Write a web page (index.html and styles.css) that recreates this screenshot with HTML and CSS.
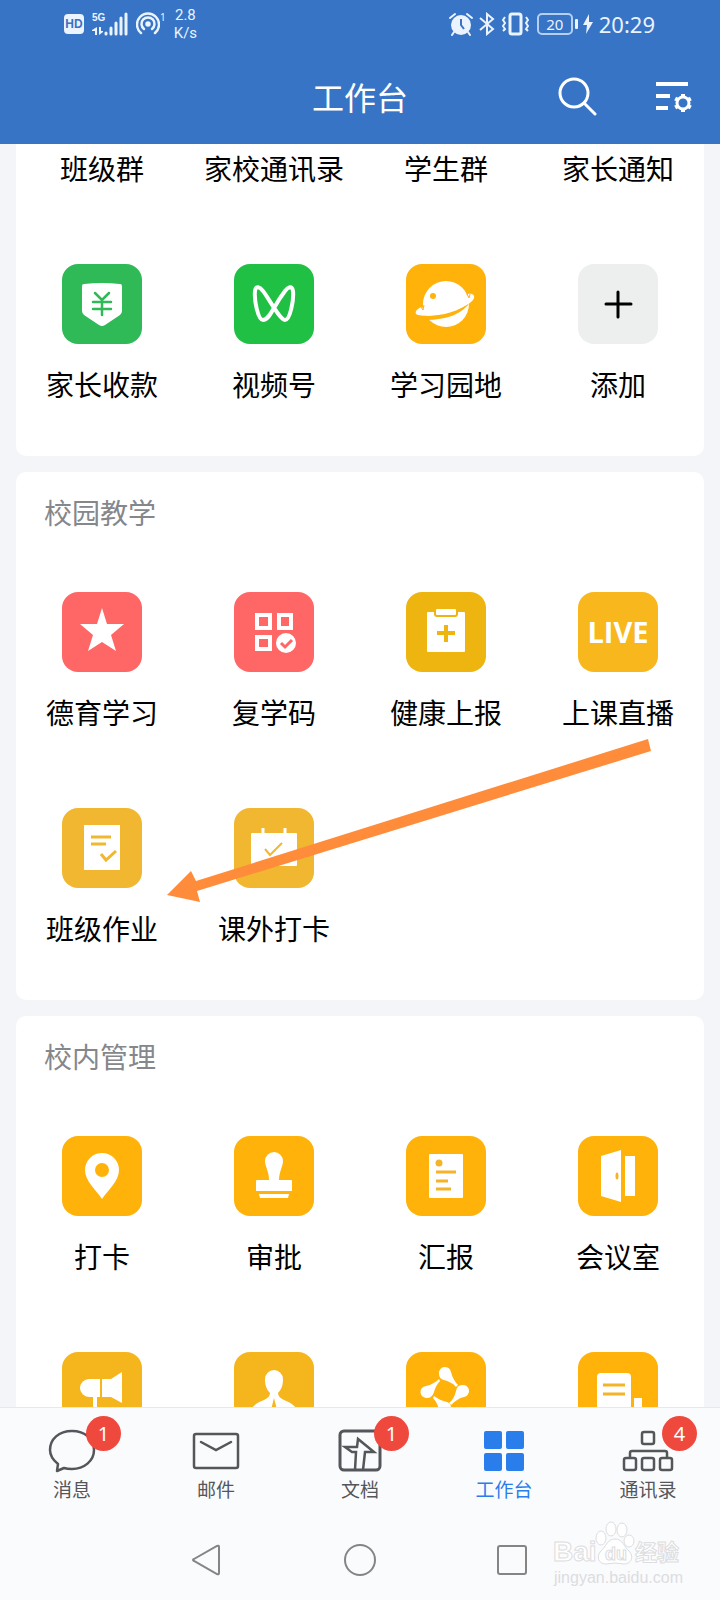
FILE: index.html
```html
<!DOCTYPE html>
<html lang="zh-CN">
<head>
	<meta charset="UTF-8">
	<meta name="viewport" content="width=device-width, initial-scale=1">
	<title>工作台</title>
	<link rel="stylesheet" href="styles.css">
</head>
<body>
	<header class="top">
		<!-- 状态栏 -->
		<div class="status">
			<div class="status-left">
				<span class="hd">HD</span>
				<div class="signal">
					<span class="net">5G</span>
					<svg width="36" height="24" viewBox="0 0 36 24">
						<path d="M3 15V23H5V15L0 18V19H3ZM7 15V23L11 20V19H9V15Z" fill="#eaf3fe"/>
						<path d="M14 22V21M19 22V16M24 22V11M29 22V6M34 22V2" stroke="#eaf3fe" stroke-width="3" stroke-linecap="round" fill="none"/>
					</svg>
				</div>
				<div class="hotspot">
					<svg width="24" height="24" viewBox="0 0 24 24" fill="none" stroke="#eaf3fe" stroke-width="2.500" stroke-linecap="round">
						<circle cx="12" cy="12" r="1.500" fill="#eaf3fe"/>
						<path d="M8 17A6.500 6.500 0 1 1 16 17"/>
						<path d="M5 21A11 11 0 1 1 19 21"/>
					</svg>
					<sup>1</sup>
				</div>
				<div class="speed">2.8<br>K/s</div>
			</div>
			<div class="status-right">
				<svg width="24" height="24" viewBox="0 0 24 24">
					<circle cx="12" cy="13" r="10" fill="#eaf3fe"/>
					<path d="M1 6L6 2M23 6L18 2M5 20L3 23M19 20L21 23" stroke="#eaf3fe" stroke-width="2" stroke-linecap="round"/>
					<path d="M12 7V13L15 17" fill="none" stroke="#3774c6" stroke-width="2"/>
				</svg>
				<svg width="16" height="24" viewBox="0 0 16 24" fill="none" stroke="#eaf3fe" stroke-width="2">
					<path d="M1 6L14 17L8 22V2L14 7L1 18"/>
				</svg>
				<svg width="28" height="24" viewBox="0 0 28 24" fill="none" stroke="#eaf3fe" stroke-width="2">
					<rect x="9" y="2" width="11" height="20" rx="2" stroke-width="3"/>
					<path d="M4 5L2 8L4 11L2 14L4 17L2 19M25 5L27 8L25 11L27 14L25 17L27 19"/>
				</svg>
				<span class="battery">20</span>
				<svg class="bolt" width="10" height="20" viewBox="0 0 10 20"><path d="M6 0L0 11H4L3 20L10 8H6Z" fill="#eaf3fe"/></svg>
				<time class="clock">20:29</time>
			</div>
		</div>
		<div class="bar">
			<h1>工作台</h1>
			<div class="actions">
				<button type="button" aria-label="搜索">
					<svg width="40" height="40" viewBox="0 0 40 40" fill="none" stroke="#fff" stroke-width="3" stroke-linecap="round">
						<circle cx="16" cy="17" r="14"/>
						<path d="M26 27L37 38"/>
					</svg>
				</button>
				<button type="button" aria-label="设置">
					<svg width="40" height="40" viewBox="0 0 40 40" fill="none" stroke="#fff">
						<path d="M2 8H34M2 20H16M2 32H14" stroke-width="4"/>
						<circle cx="29" cy="27" r="6" stroke-width="3"/>
						<path d="M29 18V21M29 33V36M21.200 22.500L24 24M34 30L36.800 31.500M21.200 31.500L24 30M34 24L36.800 22.500" stroke-width="4"/>
					</svg>
				</button>
			</div>
		</div>
	</header>

	<main>
		<section class="card card-first">
			<div class="grid">
				<a class="app" href="#"><span>班级群</span></a>
				<a class="app" href="#"><span>家校通讯录</span></a>
				<a class="app" href="#"><span>学生群</span></a>
				<a class="app" href="#"><span>家长通知</span></a>
				<a class="app" href="#">
					<svg class="icon pay" viewBox="0 0 80 80">
						<path d="M22 20Q40 18 58 20Q60 20 60 22V47Q60 49 58 51L43 61Q40 63 37 61L22 51Q20 49 20 47V22Q20 20 22 20Z" fill="#fff"/>
						<path d="M33 29L40 36L47 29M31 38H49M31 45H49M40 36V51" fill="none" stroke="#2fb957" stroke-width="2.500" stroke-linecap="round"/>
					</svg>
					<span>家长收款</span>
				</a>
				<a class="app" href="#">
					<svg class="icon video" viewBox="0 0 80 80">
						<path d="M40 44C36 51 33 56 29 56C24 56 20 36 21 27C22 21 26 23 29 27C34 33 46 56 51 56C56 56 60 36 59 27C58 21 54 23 51 27C48 31 44 37 40 44Z" fill="none" stroke="#fff" stroke-width="4" stroke-linejoin="round"/>
					</svg>
					<span>视频号</span>
				</a>
				<a class="app" href="#">
					<svg class="icon" viewBox="0 0 80 80">
						<circle cx="40" cy="40" r="23" fill="#fff"/>
						<path d="M18 52C38 52 54 47 65 37C57 50 40 56 20 56Z" fill="#ffb20a"/>
						<path d="M15 43C9 46 8 50 12 51C26 54 59 46 67 36C70 32 67 29 62 30L60 36L20 45Z" fill="#fff"/>
						<path d="M15 43L17 46L18 41M61 30L63 34L64 30" stroke="#ffb20a" fill="none"/>
						<circle cx="27" cy="32" r="3" fill="#ffb20a"/>
					</svg>
					<span>学习园地</span>
				</a>
				<a class="app" href="#">
					<svg class="icon add" viewBox="0 0 80 80">
						<path d="M28 40H53M40 28V53" stroke="#000" stroke-width="3" stroke-linecap="round"/>
					</svg>
					<span>添加</span>
				</a>
			</div>
		</section>

		<section class="card">
			<h2>校园教学</h2>
			<div class="grid">
				<a class="app" href="#">
					<svg class="icon red" viewBox="0 0 80 80">
						<path d="M40 16L45 32H62L49 43L54 59L40 50L26 59L31 43L18 32H35Z" fill="#fff"/>
					</svg>
					<span>德育学习</span>
				</a>
				<a class="app" href="#">
					<svg class="icon red" viewBox="0 0 80 80">
						<path d="M23 23H36V36H23ZM45 23H57V36H45ZM23 45H36V57H23Z" fill="none" stroke="#fff" stroke-width="4"/>
						<circle cx="52" cy="51" r="10" fill="#fff"/>
						<path d="M47 51L51 55L58 48" fill="none" stroke="#ff6766" stroke-width="3"/>
					</svg>
					<span>复学码</span>
				</a>
				<a class="app" href="#">
					<svg class="icon health" viewBox="0 0 80 80">
						<rect x="21" y="20" width="38" height="40" rx="1" fill="#fff"/>
						<rect x="29" y="16" width="22" height="8" rx="2" fill="#fff" stroke="#eeb510" stroke-width="2"/>
						<path d="M31 41H49M40 33V50" stroke="#eeb510" stroke-width="4"/>
					</svg>
					<span>健康上报</span>
				</a>
				<a class="app" href="#">
					<b class="icon live">LIVE</b>
					<span>上课直播</span>
				</a>
				<a class="app" href="#">
					<svg class="icon sand" viewBox="0 0 80 80">
						<rect x="22" y="17" width="36" height="45" fill="#fff"/>
						<path d="M29 29H49M29 36H44M39 46L44 52L54 43" fill="none" stroke="#f1b730" stroke-width="3"/>
					</svg>
					<span>班级作业</span>
				</a>
				<a class="app" href="#">
					<svg class="icon sand" viewBox="0 0 80 80">
						<rect x="17" y="25" width="46" height="33" rx="1" fill="#fff"/>
						<path d="M29 20V26M51 20V26" stroke="#fff" stroke-width="3"/>
						<path d="M31 41L36 47L48 35" fill="none" stroke="#f1b730" stroke-width="2"/>
					</svg>
					<span>课外打卡</span>
				</a>
			</div>
			<!-- 指向班级作业的箭头 -->
			<svg class="arrow" width="484" height="164" viewBox="0 0 484 164">
				<path d="M0 156L24 132L29 142L481 0L484 12L30 152L33 163Z" fill="#ff8c3a"/>
			</svg>
		</section>

		<section class="card">
			<h2>校内管理</h2>
			<div class="grid">
				<a class="app" href="#">
					<svg class="icon" viewBox="0 0 80 80">
						<path d="M40 63C34 54 23 45 23 34A17 17 0 0 1 57 34C57 45 46 54 40 63Z" fill="#fff"/>
						<circle cx="40" cy="34" r="7" fill="#ffb20a"/>
					</svg>
					<span>打卡</span>
				</a>
				<a class="app" href="#">
					<svg class="icon" viewBox="0 0 80 80">
						<path d="M35 44C35 36 31 30 31 25A9 9 0 0 1 49 25C49 30 45 36 45 44H57Q58 44 58 45V55H22V45Q22 44 23 44ZM25 58H55L54 62H26Z" fill="#fff"/>
					</svg>
					<span>审批</span>
				</a>
				<a class="app" href="#">
					<svg class="icon" viewBox="0 0 80 80">
						<rect x="23" y="18" width="34" height="44" rx="1" fill="#fff"/>
						<circle cx="33" cy="27" r="3.500" fill="#f5b32a"/>
						<path d="M30 36H50M30 45H42M30 53H45" stroke="#f5b32a" stroke-width="3"/>
					</svg>
					<span>汇报</span>
				</a>
				<a class="app" href="#">
					<svg class="icon" viewBox="0 0 80 80">
						<path d="M23 20L43 14V66L23 60ZM47 20H57V60H47Z" fill="#fff"/>
						<ellipse cx="39" cy="40" rx="1.500" ry="3.500" fill="#f5b32a"/>
					</svg>
					<span>会议室</span>
				</a>
				<a class="app" href="#">
					<svg class="icon dim" viewBox="0 0 80 80">
						<path d="M38 27H27A9 9 0 0 0 27 45H31V62H35V45H38ZM40 27H49L60 20V51L49 45H40Z" fill="#fff"/>
					</svg>
				</a>
				<a class="app" href="#">
					<svg class="icon dim" viewBox="0 0 80 80">
						<path d="M31 27A9 9 0 0 1 49 27C49 34 47 38 44 41C44 44 46 46 50 48C58 51 63 55 65 62H15C17 55 22 51 30 48C34 46 36 44 36 41C33 38 31 34 31 27Z" fill="#fff"/>
						<path d="M40 46L44 62H36Z" fill="#f5b51d"/>
					</svg>
				</a>
				<a class="app" href="#">
					<svg class="icon" viewBox="0 0 80 80" fill="#fff">
						<path d="M33 22A6 6 0 0 1 45 20C46 25 49 30 52 33L50 35C47 31 42 29 38 28Q33 27 33 22Z"/>
						<path d="M56 33A6 6 0 0 1 58 45C53 46 49 49 45 53L43 51C47 48 49 43 50 39Q51 33 56 33Z"/>
						<path d="M45 56A6 6 0 0 1 33 58C32 53 30 49 27 46L28 44C32 47 36 49 41 50Q45 51 45 56Z"/>
						<path d="M21 46A6 6 0 0 1 20 34C25 33 30 30 33 27L34 29C31 32 29 36 28 40Q26 46 21 46Z"/>
					</svg>
				</a>
				<a class="app" href="#">
					<svg class="icon" viewBox="0 0 80 80">
						<rect x="19" y="21" width="34" height="44" rx="4" fill="#fff"/>
						<path d="M56 46H64V58Q64 62 56 62Z" fill="#fff"/>
						<path d="M25 33H47M25 42H47" stroke="#f5b32a" stroke-width="3"/>
					</svg>
				</a>
			</div>
		</section>
	</main>

	<footer>
		<nav class="tabs">
			<a href="#">
				<span class="tab-icon">
					<svg width="48" height="48" viewBox="0 0 48 48" fill="none" stroke="#54565a" stroke-width="2.500" stroke-linejoin="round">
						<path d="M9 44L10 37C5 33 2 28 2 23C2 12 11 4 24 4S46 12 46 23S36 42 24 42Q19 42 16 41Z"/>
					</svg>
					<i class="badge">1</i>
				</span>
				消息
			</a>
			<a href="#">
				<span class="tab-icon">
					<svg width="48" height="48" viewBox="0 0 48 48" fill="none" stroke="#54565a" stroke-width="2.500" stroke-linecap="round">
						<rect x="2" y="7" width="44" height="34" rx="2"/>
						<path d="M9 15L24 23L39 15"/>
					</svg>
				</span>
				邮件
			</a>
			<a href="#">
				<span class="tab-icon">
					<svg width="48" height="48" viewBox="0 0 48 48" fill="none" stroke="#54565a" stroke-width="3">
						<rect x="4" y="4" width="40" height="39" rx="4"/>
						<path d="M19 43L20 25H16L9 20L21 20L22 12L38 25H29L27 43" stroke-width="2.500"/>
					</svg>
					<i class="badge">1</i>
				</span>
				文档
			</a>
			<a class="active" href="#">
				<span class="tab-icon">
					<svg width="48" height="48" viewBox="0 0 48 48" fill="#297eec">
						<rect x="4" y="4" width="18" height="18" rx="2"/>
						<rect x="26" y="4" width="18" height="18" rx="2"/>
						<rect x="4" y="26" width="18" height="18" rx="2"/>
						<rect x="26" y="26" width="18" height="18" rx="2"/>
					</svg>
				</span>
				工作台
			</a>
			<a href="#">
				<span class="tab-icon">
					<svg width="52" height="48" viewBox="0 0 52 48" fill="none" stroke="#54565a" stroke-width="2.500">
						<rect x="20" y="5" width="12" height="12" rx="2"/>
						<rect x="2" y="31" width="12" height="12" rx="2"/>
						<rect x="20" y="31" width="12" height="12" rx="2"/>
						<rect x="38" y="31" width="12" height="12" rx="2"/>
						<path d="M8 31V26Q8 24 10 24H43Q45 24 45 26V31"/>
					</svg>
					<i class="badge">4</i>
				</span>
				通讯录
			</a>
		</nav>
		<!-- 系统导航键 -->
		<div class="keys">
			<button type="button" aria-label="返回">
				<svg width="32" height="32" viewBox="0 0 32 32"><path d="M2 15L25 2Q27 1 27 3V29Q27 31 25 30L2 17Q0 16 2 15Z"/></svg>
			</button>
			<button type="button" aria-label="主页">
				<svg width="32" height="32" viewBox="0 0 32 32"><circle cx="16" cy="16" r="15"/></svg>
			</button>
			<button type="button" aria-label="最近任务">
				<svg width="32" height="32" viewBox="0 0 32 32"><rect x="2" y="2" width="28" height="28" rx="2"/></svg>
			</button>
		</div>
		<svg class="watermark" width="132" height="72" viewBox="0 0 132 72">
			<g fill="#fff" stroke="#dcdde0">
				<text class="wm-big" x="1" y="43">Bai</text>
				<ellipse cx="49" cy="20" rx="5" ry="7"/>
				<ellipse cx="59" cy="11" rx="5" ry="7"/>
				<ellipse cx="70" cy="12" rx="5" ry="7"/>
				<ellipse cx="77" cy="23" rx="5" ry="6"/>
				<path d="M63 21C55 21 54 29 49 33C44 38 46 46 54 46Q63 44 72 46C80 46 82 38 77 33C72 29 71 21 63 21Z"/>
				<text class="wm-du" x="53" y="42">du</text>
				<text class="wm-cn" x="83" y="42">经验</text>
				<text class="wm-url" x="2" y="65">jingyan.baidu.com</text>
			</g>
		</svg>
	</footer>
</body>
</html>
```
FILE: styles.css
```css
*{
	margin: 0;
	padding: 0;
	box-sizing: border-box;
}
body{
	display: flex;
	flex-direction: column;
	height: 100vh;
	background: #f4f5f8;
	color: #000;
	font-family: "Noto Sans CJK SC", sans-serif;
}
a{
	color: inherit;
	text-decoration: none;
}
button{
	border: 0;
	background: none;
	cursor: pointer;
}
svg{
	display: block;
}

/* 顶部 */
.top{
	flex: none;
	background: #3774c6;
	color: #fff;
}
.status{
	display: flex;
	justify-content: space-between;
	height: 48px;
	padding: 0 65px 0 64px;
	color: #eaf3fe;
	font-family: "Noto Sans", sans-serif;
}
.status-left,
.status-right{
	display: flex;
	align-items: center;
	gap: 8px;
}
.status-right{
	gap: 6px;
}
.hd{
	width: 20px;
	height: 20px;
	border-radius: 4px;
	background: #eaf3fe;
	color: #3774c6;
	font: bold 12px/20px "Liberation Sans", sans-serif;
	text-align: center;
}
.signal{
	position: relative;
}
.net{
	position: absolute;
	left: 0;
	top: 1px;
	font: bold 10px/10px "Liberation Sans", sans-serif;
}
.hotspot{
	display: flex;
}
.hotspot sup{
	font-size: 10px;
	line-height: 10px;
}
.speed{
	font: 15px/18px Roboto, sans-serif;
	text-align: center;
}
.battery{
	position: relative;
	width: 36px;
	height: 22px;
	margin: 0 4px 0 2px;
	border: 2px solid #b5cff0;
	border-radius: 5px;
	font-size: 15px;
	line-height: 18px;
	text-align: center;
}
.battery::after{
	content: "";
	position: absolute;
	right: -7px;
	top: 4px;
	width: 3px;
	height: 10px;
	border-radius: 1px;
	background: #eaf3fe;
}
.clock{
	font-size: 22px;
}
.bar{
	display: grid;
	grid-template-columns: 1fr auto 1fr;
	align-items: center;
	height: 96px;
	padding: 0 26px;
}
.bar h1{
	grid-column: 2;
	font-size: 32px;
	line-height: 40px;
	font-weight: 400;
}
.actions{
	display: flex;
	justify-content: flex-end;
	gap: 56px;
}

/* 应用列表 */
main{
	flex: 1;
	min-height: 0;
	padding: 0 16px;
	overflow: hidden;
}
.card{
	position: relative;
	margin-bottom: 16px;
	padding: 24px 0 56px;
	border-radius: 10px;
	background: #fff;
}
.card-first{
	padding-top: 8px;
	border-radius: 0 0 10px 10px;
}
.card h2{
	padding: 0 28px;
	margin-bottom: 64px;
	color: #85878b;
	font-size: 28px;
	line-height: 32px;
	font-weight: 400;
}
.grid{
	display: grid;
	grid-template-columns: repeat(4, 1fr);
	row-gap: 80px;
}
.app{
	display: flex;
	flex-direction: column;
	align-items: center;
	gap: 24px;
	font-size: 28px;
	line-height: 32px;
	white-space: nowrap;
}
.icon{
	width: 80px;
	height: 80px;
	border-radius: 16px;
	background: #ffb20a;
}
.pay{
	background: #2fb957;
}
.video{
	background: #20c045;
}
.add{
	background: #edefee;
}
.red{
	background: #ff6766;
}
.health{
	background: #eeb510;
}
.live{
	background: #f7b71d;
	color: #fff;
	font: 700 29px/80px "Open Sans", sans-serif;
	text-align: center;
}
.sand{
	background: #f1b730;
}
.dim{
	background: #f5b51d;
}
.arrow{
	position: absolute;
	left: 151px;
	top: 267px;
}

/* 底部 */
footer{
	position: relative;
	flex: none;
	border-top: 1px solid #e6e8eb;
	background: #fafbfd;
}
.tabs{
	display: grid;
	grid-template-columns: repeat(5, 1fr);
	height: 112px;
	padding-top: 19px;
	color: #54565a;
	font-size: 19px;
	line-height: 28px;
}
.tabs a{
	display: flex;
	flex-direction: column;
	align-items: center;
}
.tabs .active{
	color: #297eec;
}
.tab-icon{
	position: relative;
}
.badge{
	position: absolute;
	left: calc(50% + 14px);
	top: -11px;
	width: 35px;
	height: 35px;
	border-radius: 50%;
	background: #ef493d;
	color: #fff;
	font: 20px/35px "Noto Sans", sans-serif;
	text-align: center;
}
.keys{
	display: flex;
	justify-content: center;
	align-items: center;
	gap: 120px;
	height: 80px;
}
.keys svg{
	fill: none;
	stroke: #858585;
	stroke-width: 2;
}
.watermark{
	position: absolute;
	right: 36px;
	bottom: 10px;
}
.wm-big{
	font: bold 28px "Liberation Sans", sans-serif;
}
.wm-du{
	font: bold 18px "Liberation Sans", sans-serif;
}
.wm-cn{
	font: bold 22px "Noto Sans CJK SC", sans-serif;
}
.wm-url{
	fill: #dcdde0;
	stroke: none;
	font: 16px "Liberation Sans", sans-serif;
}
```
